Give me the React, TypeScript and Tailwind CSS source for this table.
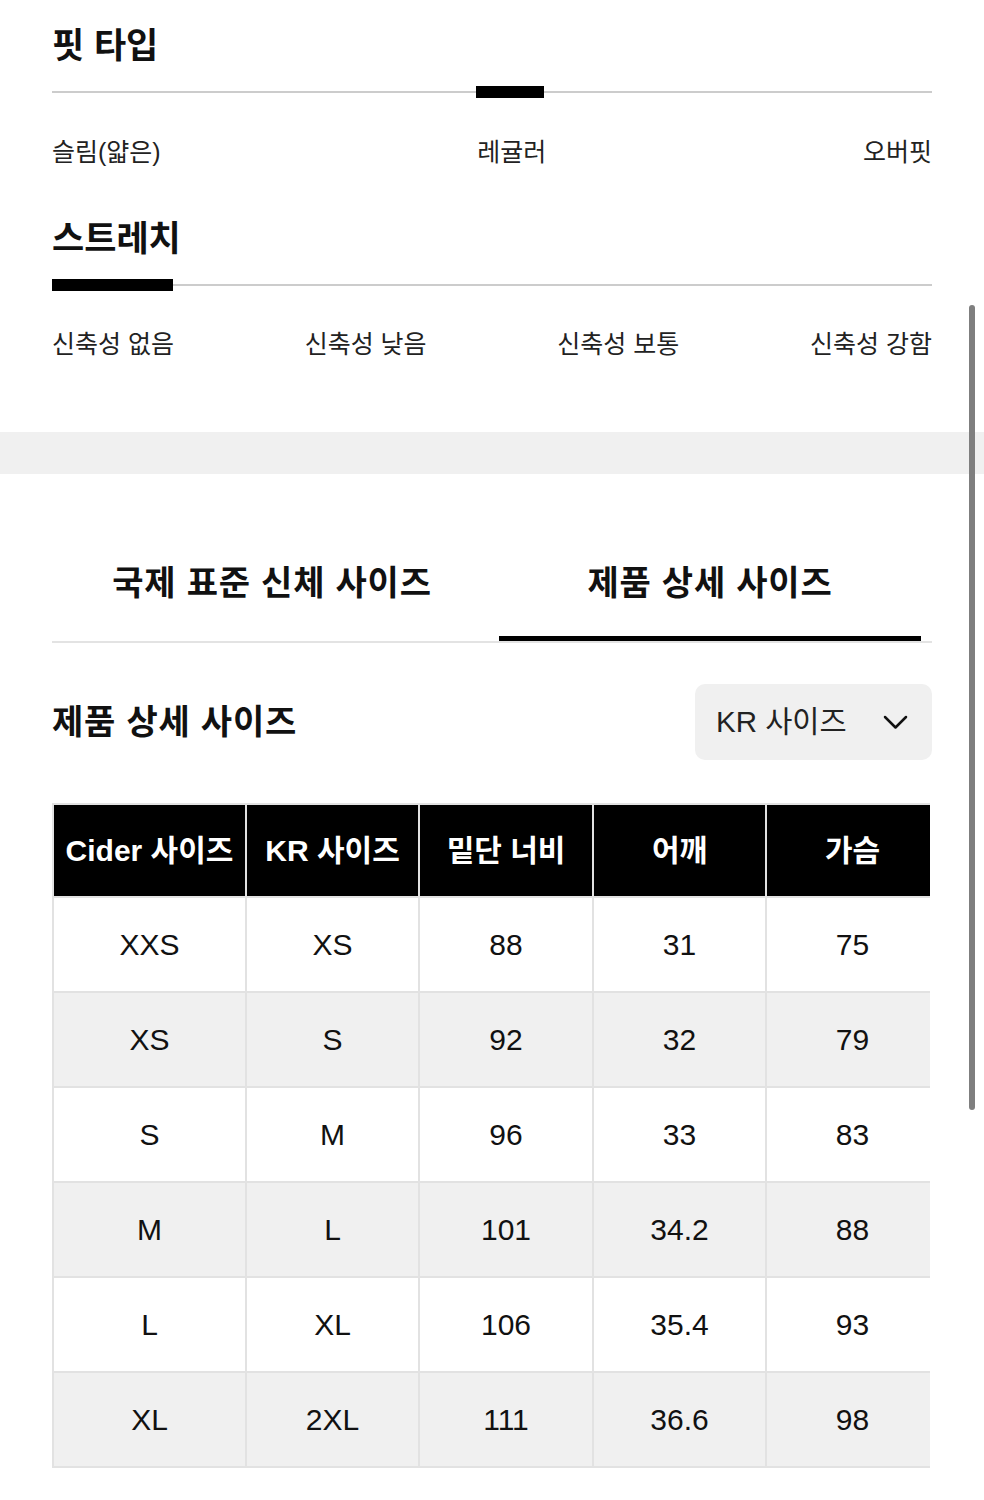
const fitLabels = ["슬림(얇은)", "레귤러", "오버핏"];
const stretchLabels = ["신축성 없음", "신축성 낮음", "신축성 보통", "신축성 강함"];

const headers = ["Cider 사이즈", "KR 사이즈", "밑단 너비", "어깨", "가슴"];
const rows = [
    ["XXS", "XS", "88", "31", "75"],
    ["XS", "S", "92", "32", "79"],
    ["S", "M", "96", "33", "83"],
    ["M", "L", "101", "34.2", "88"],
    ["L", "XL", "106", "35.4", "93"],
    ["XL", "2XL", "111", "36.6", "98"],
];

export default function App() {
    return (
        <div className="relative w-[984px] min-h-[1500px] bg-white font-['Liberation_Sans','Noto_Sans_CJK_KR',sans-serif] text-[#111]">
            {/* fit type */}
            <div className="px-[52px] pt-[23px]">
                <h2 className="text-[35px] leading-[46px] font-bold">핏 타입</h2>
                <div className="relative mt-[22px] h-[2px] bg-[#cccccc]">
                    <div className="absolute left-[424px] top-[-5px] h-[12px] w-[68px] bg-black" />
                </div>
                <div className="mt-[42px] flex justify-between text-[25px] leading-[34px] text-[#222]">
                    {fitLabels.map((l) => (
                        <span key={l}>{l}</span>
                    ))}
                </div>
            </div>

            {/* stretch */}
            <div className="px-[52px] pt-[47px]">
                <h2 className="text-[35px] leading-[46px] font-bold">스트레치</h2>
                <div className="relative mt-[22px] h-[2px] bg-[#cccccc]">
                    <div className="absolute left-0 top-[-5px] h-[12px] w-[121px] bg-black" />
                </div>
                <div className="mt-[41px] flex justify-between text-[25px] leading-[34px] text-[#222]">
                    {stretchLabels.map((l) => (
                        <span key={l}>{l}</span>
                    ))}
                </div>
            </div>

            <div className="mt-[71px] h-[42px] bg-[#f0f0f0]" />

            {/* tabs */}
            <div className="px-[52px] pt-[85px]">
                <div className="flex border-b-2 border-[#e3e3e3]">
                    <div className="flex w-[440px] justify-center pb-[34px] text-[34px] leading-[48px] font-bold tracking-[0.8px]">
                        국제 표준 신체 사이즈
                    </div>
                    <div className="ml-[7px] flex w-[422px] justify-center border-b-[5px] border-black pb-[29px] text-[34px] leading-[48px] font-bold tracking-[0.8px]">
                        제품 상세 사이즈
                    </div>
                </div>

                <div className="mt-[41px] flex items-center justify-between">
                    <h3 className="text-[34px] leading-[48px] font-bold tracking-[0.8px]">제품 상세 사이즈</h3>
                    <button className="flex h-[76px] w-[237px] items-center justify-between rounded-[10px] bg-[#f0f0f0] pl-[21px] pr-[24px] text-[29.5px] text-[#222]">
                        <span>KR 사이즈</span>
                        <svg width="25" height="15" viewBox="0 0 25 15" fill="none">
                            <polyline points="2,2 12.5,12.5 23,2" stroke="#111" strokeWidth="2.5" strokeLinecap="round" strokeLinejoin="round" />
                        </svg>
                    </button>
                </div>

                {/* table */}
                <div className="mt-[43px] w-[878px] overflow-hidden">
                    <div className="grid w-max grid-cols-[191px_171px_172px_171px_171px] gap-[2px] bg-[#e2e2e2] p-[2px]">
                        {headers.map((h) => (
                            <div key={h} className="flex h-[91px] items-center justify-center bg-black text-[30px] font-bold text-white">
                                {h}
                            </div>
                        ))}
                        {rows.map((r, i) =>
                            r.map((c, j) => (
                                <div
                                    key={`${i}-${j}`}
                                    className={`flex h-[93px] items-center justify-center text-[30px] text-[#111] ${i % 2 === 1 ? "bg-[#f0f0f0]" : "bg-white"}`}
                                >
                                    {c}
                                </div>
                            ))
                        )}
                    </div>
                </div>
            </div>

            {/* scroll indicator */}
            <div className="absolute left-[969px] top-[305px] h-[805px] w-[6px] rounded-full bg-[#7f7f7f]" />
        </div>
    );
}
